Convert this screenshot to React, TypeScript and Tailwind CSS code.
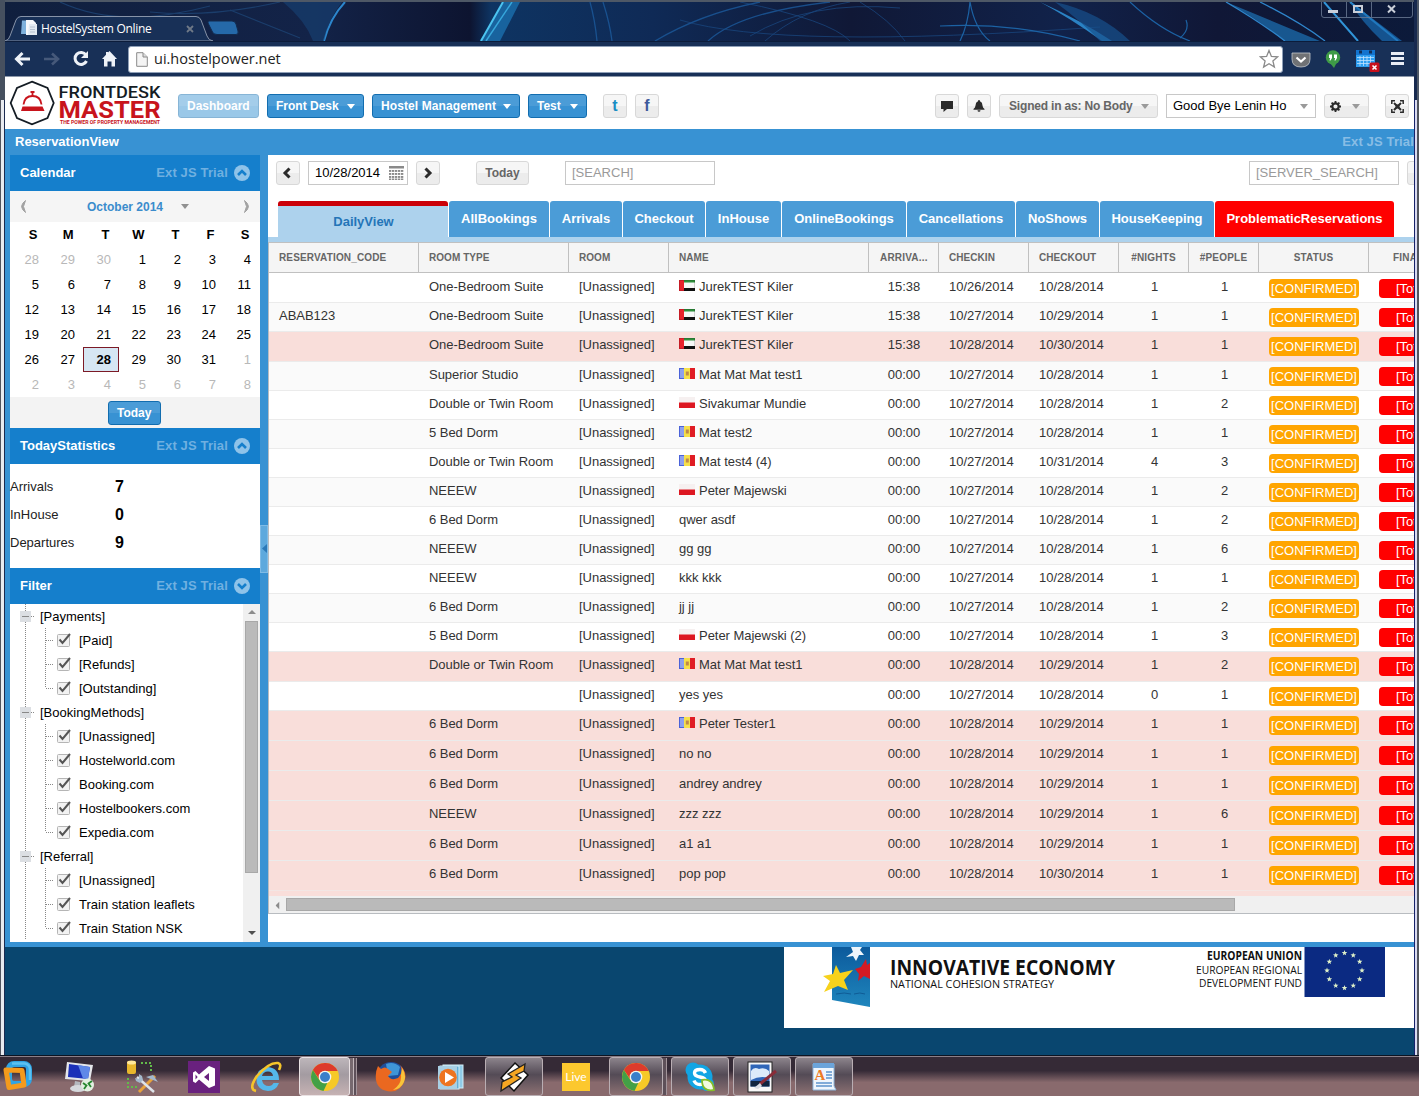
import React from 'react';

const Caret = ({ c = '#fff', w = 8, h = 5 }: { c?: string; w?: number; h?: number }) => (
  <svg width={w} height={h} viewBox="0 0 8 5" preserveAspectRatio="none" className="shrink-0"><path d="M0 0H8L4 5Z" fill={c} /></svg>
);

/* ---------- Browser chrome ---------- */

const TitleArt = () => (
  <svg width="1409" height="39" viewBox="5 2 1409 39" className="absolute left-0 top-0">
    <defs>
      <linearGradient id="tb" x1="0" x2="1">
        <stop offset="0" stopColor="#101f3e" /><stop offset=".22" stopColor="#132348" /><stop offset=".33" stopColor="#0d1430" />
        <stop offset=".345" stopColor="#0e3462" /><stop offset=".46" stopColor="#0f2a56" /><stop offset=".6" stopColor="#101836" />
        <stop offset=".75" stopColor="#11224a" /><stop offset=".86" stopColor="#101736" /><stop offset="1" stopColor="#0c1a3a" />
      </linearGradient>
    </defs>
    <rect x="5" y="2" width="1409" height="39" fill="url(#tb)" />
    <path d="M503 2L480 41H500L520 2Z" fill="#1c78b8" opacity=".7" />
    <path d="M503 2L481 41" stroke="#4cc4f0" strokeWidth="2" fill="none" />
    <path d="M512 2L486 41" stroke="#37a7dc" strokeWidth="1.5" fill="none" />
    <path d="M345 2Q330 18 324 41" stroke="#2c86cc" strokeWidth="2" fill="none" />
    <path d="M283 2Q305 20 313 41L324 41Q328 20 342 2Z" fill="#174377" opacity=".6" />
    <path d="M590 2Q595 20 597 41M603 2Q610 24 612 41M655 41Q700 14 760 2M708 41Q740 12 830 2" stroke="#1c5a9c" strokeWidth="1.3" fill="none" opacity=".8" />
    <path d="M740 2Q830 20 850 41M750 36Q810 0 900 8M765 41Q800 10 850 2M680 20Q780 50 1100 27M860 2Q890 20 905 41" stroke="#194a84" strokeWidth="1" fill="none" opacity=".7" />
    <path d="M1040 2Q1080 20 1112 41L1102 41Q1070 18 1040 2Z" fill="#2a82c4" />
    <path d="M1055 2Q1100 12 1130 41L1100 41Q1080 20 1055 2Z" fill="#17508c" opacity=".7" />
    <path d="M1226 2Q1270 20 1320 41H1284Q1260 20 1226 2Z" fill="#1c6cae" opacity=".75" />
    <path d="M1226 2Q1260 22 1285 41M1260 2Q1300 22 1325 41" stroke="#2f86cc" strokeWidth="1.3" fill="none" />
    <path d="M1324 2L1358 41M1350 2L1398 41" stroke="#3094d8" strokeWidth="2" fill="none" />
    <path d="M1350 2Q1375 20 1402 41H1382Q1360 20 1350 2Z" fill="#1a6cb4" opacity=".7" />
    <path d="M970 2Q968 25 960 41M970 2Q975 30 990 41M940 26Q1010 22 1080 41M1180 38Q1190 30 1186 20M1130 2Q1160 30 1190 41" stroke="#1c62a4" strokeWidth="1.2" fill="none" />
    <path d="M60 2Q120 30 210 6M150 12Q210 18 280 2M230 10L300 38" stroke="#1b3d6b" strokeWidth="1.2" fill="none" />
  </svg>
);

const Tab = () => (
  <svg width="240" height="26" viewBox="5 16 240 26" className="absolute left-0 bottom-0">
    <path d="M5 42Q9 41 10 37L16 21Q17.500 17.500 21 17.500H196Q199.500 17.500 201 21L207 37Q208.500 41.500 213 42Z" fill="#183057" stroke="#8793a8" strokeWidth="1" />
    <path d="M209 22H232Q235 22 236 25L238 32Q239 35.500 236 35.500H217Q213.500 35.500 212.500 33L208 24Q207.500 22 209 22Z" fill="#2569a9" stroke="#122a4e" strokeWidth="1" />
    <path d="M22 21.500H28V35H21Z" fill="#7fb1dc" />
    <path d="M26 21H33L36 24V36H26Z" fill="#f6f8fb" />
    <path d="M29 25H37V36H28Z" fill="#e3eaf2" /><path d="M30 28H35M30 30.500H35M30 33H35" stroke="#aab8c8" strokeWidth=".8" />
    <path d="M187 27L193 33M193 27L187 33" stroke="#6f7987" strokeWidth="1.8" />
  </svg>
);

const WindowButtons = () => (
  <svg width="94" height="18" viewBox="1321 0 94 18" className="absolute right-0 -top-[2px]">
    <path d="M1322.500 0V15Q1322.500 17.500 1325 17.500H1411Q1413.500 17.500 1413.500 15V0M1347.500 0V17M1372.500 0V17" fill="none" stroke="#6d7c96" strokeOpacity=".8" />
    <rect x="1329" y="10" width="10" height="3" fill="#c9ced8" />
    <rect x="1355" y="6" width="8" height="6" fill="none" stroke="#c9ced8" strokeWidth="2" />
    <path d="M1389 5.500L1396 12.500M1396 5.500L1389 12.500" stroke="#c9ced8" strokeWidth="2" />
  </svg>
);

const BrowserTop = () => (
  <div className="h-[77px] shrink-0 flex flex-col">
    <div className="h-[2px] bg-[#4e5866]" />
    <div className="h-[39px] relative overflow-hidden">
      <TitleArt />
      <Tab />
      <div className="relative pl-[36px] pt-[17px] leading-[20px] text-[12px] tracking-[-0.3px] text-white font-['Open_Sans',sans-serif]">HostelSystem Online</div>
      <WindowButtons />
    </div>
    <div className="h-[35px] bg-[#183057] flex items-center border-t border-[#0c1c3a]">
      <svg width="118" height="26" viewBox="5 46 118 26" className="shrink-0">
        <path d="M30 59H17M22.500 53L16.500 59L22.500 65" stroke="#eef2f8" strokeWidth="3" fill="none" />
        <path d="M44 59H57M52 53.500L58 59L52 64.500" stroke="#46597a" strokeWidth="2.600" fill="none" />
        <path d="M86 55A6 6 0 1 0 86.500 61" stroke="#eef2f8" strokeWidth="3" fill="none" />
        <path d="M88 51V58H81Z" fill="#eef2f8" />
        <path d="M109.500 51L117 59H115V66.500H111.500V61.500H107.500V66.500H104V59H102L106 54.700V52H108V52.600Z" fill="#eef2f8" />
      </svg>
      <div className="ml-[5px] w-[1155px] h-[27px] shrink-0 bg-white border border-[#8fa0b8] rounded-[3px] flex items-center">
        <svg width="12" height="15" viewBox="0 0 12 15" className="ml-[7px]"><path d="M.7 .7H7L11.300 5V14.300H.7Z" fill="#f4f4f4" stroke="#8a8a8a" /><path d="M7 .7V5H11.300" fill="#ddd" stroke="#8a8a8a" /></svg>
        <span className="ml-[6px] text-[14.500px] leading-[20px] tracking-[0px] text-[#222] font-['Open_Sans',sans-serif] grow">ui.hostelpower.net</span>
        <svg width="20" height="20" viewBox="0 0 20 20" className="mr-[3px]"><path d="M10 1.500L12.400 7.400L18.700 7.800L13.900 11.900L15.400 18L10 14.700L4.600 18L6.100 11.900L1.300 7.800L7.600 7.400Z" fill="#fff" stroke="#8a8a8a" strokeWidth="1.300" /></svg>
      </div>
      <svg width="126" height="30" viewBox="1288 44 126 30" className="ml-[5px] shrink-0">
        <path d="M1292 53H1310V59Q1310 67 1301 67Q1292 67 1292 59Z" fill="#707275" stroke="#c4c8cc" strokeWidth=".8" />
        <path d="M1296.500 57.500L1301 61.500L1305.500 57.500" stroke="#fff" strokeWidth="2.200" fill="none" />
        <circle cx="1333" cy="57.500" r="7.200" fill="#3f9b47" /><path d="M1330 63L1334 68L1337 62Z" fill="#3f9b47" />
        <path d="M1329 54.500H1332V58L1330.500 60.500H1329.500L1330.200 58H1329ZM1334 54.500H1337V58L1335.500 60.500H1334.500L1335.200 58H1334Z" fill="#fff" />
        <rect x="1356" y="51" width="19" height="16" fill="#2d9df0" /><rect x="1356" y="50" width="19" height="5" fill="#1374cf" />
        <rect x="1359" y="50.500" width="3" height="3" fill="#12315a" /><rect x="1369" y="50.500" width="3" height="3" fill="#12315a" />
        <path d="M1357 57.500H1374M1357 60.500H1374M1357 63.500H1374M1360 56V66M1363.500 56V66M1367 56V66M1370.500 56V66" stroke="#bfe2ff" strokeWidth=".8" />
        <rect x="1369.500" y="62.500" width="10" height="9.500" rx="1.500" fill="#c8101c" /><path d="M1372.500 65.500L1376.500 69.500M1376.500 65.500L1372.500 69.500" stroke="#fff" strokeWidth="1.600" />
        <path d="M1391 53.500H1404M1391 58.500H1404M1391 63.500H1404" stroke="#e9edf5" strokeWidth="3.200" />
      </svg>
    </div>
    <div className="h-[1px] bg-[#8c98aa]" />
  </div>
);

/* ---------- Application header ---------- */

const Logo = () => (
  <svg width="152" height="46" viewBox="9 80 152 46" className="shrink-0">
    <path d="M32 81.700L47.500 88L53.700 103L47.500 118L32 124.300L17 118L10.700 103L17 88Z" fill="#fff" stroke="#141c24" strokeWidth="1.800" />
    <path d="M23.500 104.500Q24.500 96 32.500 96Q40.500 96 41.500 104.500" fill="none" stroke="#c8141c" strokeWidth="1.800" />
    <path d="M32.500 96V92M30.500 92H34.500" stroke="#c8141c" strokeWidth="1.800" />
    <path d="M22.500 106.500H42.500L44.500 111H21Z" fill="#c8141c" />
    <g fontFamily="Roboto, sans-serif">
      <text x="58.500" y="97.500" fontSize="17" fontWeight="500" fill="#141c24" textLength="102" lengthAdjust="spacingAndGlyphs">FRONTDESK</text>
      <text x="58.500" y="118" fontSize="24.500" fontWeight="700" fill="#c8141c" textLength="102" lengthAdjust="spacingAndGlyphs">MASTER</text>
      <text x="60" y="123.500" fontSize="4.600" fontWeight="700" fill="#c8141c" textLength="100" lengthAdjust="spacingAndGlyphs">THE POWER OF PROPERTY MANAGEMENT</text>
    </g>
  </svg>
);

const BlueBtn = ({ label, cls, caret = true }: { label: string; cls: string; caret?: boolean }) => (
  <div className={'h-[24px] shrink-0 flex items-center justify-between rounded-[3px] border border-[#126daf] bg-linear-to-b from-[#4b9cd7] from-50% to-[#3892d3] to-50% pl-[8px] pr-[8px] text-[12px] font-bold text-white whitespace-nowrap ' + cls}>
    <span>{label}</span>
    {caret && <Caret />}
  </div>
);

const GrayBtn = ({ cls, children }: { cls: string; children?: React.ReactNode }) => (
  <div className={'h-[24px] shrink-0 flex items-center rounded-[3px] border border-[#d8d8d8] bg-linear-to-b from-[#f6f6f6] from-50% to-[#ececec] to-50% text-[12px] font-bold text-[#666] whitespace-nowrap ' + cls}>{children}</div>
);

const Header = () => (
  <div className="h-[52px] shrink-0 bg-white flex items-start">
    <div className="ml-[4px] w-[169px] pt-[3px]"><Logo /></div>
    <div className="grow flex items-center pt-[17px]">
      <BlueBtn label="Dashboard" cls="w-[81px] opacity-50" caret={false} />
      <BlueBtn label="Front Desk" cls="ml-[8px] w-[97px]" />
      <BlueBtn label="Hostel Management" cls="ml-[8px] w-[148px] tracking-[0.1px]" />
      <BlueBtn label="Test" cls="ml-[8px] w-[59px]" />
      <GrayBtn cls="ml-[16px] w-[24px] justify-center"><span className="text-[16px] leading-[20px] text-[#1a8ec4]">t</span></GrayBtn>
      <GrayBtn cls="ml-[8px] w-[24px] justify-center"><span className="text-[16px] leading-[20px] text-[#3f5a9b]">f</span></GrayBtn>
      <div className="grow" />
      <GrayBtn cls="w-[24px] justify-center"><svg width="12" height="11" viewBox="0 0 12 11"><path d="M0 0H12V8H6L2.500 11V8H0Z" fill="#2b2b2b" /></svg></GrayBtn>
      <GrayBtn cls="ml-[8px] w-[24px] justify-center"><svg width="12" height="12" viewBox="0 0 12 12"><path d="M6 0Q7 0 7 1.300Q9.500 2.200 9.500 5.500Q9.600 7.500 11.500 9V9.800H.5V9Q2.400 7.500 2.500 5.500Q2.500 2.200 5 1.300Q5 0 6 0ZM4.500 10.300H7.500Q7.500 11.800 6 11.800Q4.500 11.800 4.500 10.300Z" fill="#2b2b2b" /></svg></GrayBtn>
      <GrayBtn cls="ml-[8px] w-[159px] justify-between pl-[9px] pr-[8px]"><span className="tracking-[-0.18px]">Signed in as: No Body</span><Caret c="#9a9a9a" /></GrayBtn>
      <div className="ml-[8px] w-[150px] h-[24px] shrink-0 border border-[#c8c8c8] flex items-center justify-between pl-[6px] pr-[7px] text-[13px] text-black whitespace-nowrap"><span>Good Bye Lenin Ho</span><Caret c="#9a9a9a" /></div>
      <GrayBtn cls="ml-[8px] w-[45px] justify-between pl-[5px] pr-[8px]"><svg width="11" height="11" viewBox="0 0 11 11"><circle cx="5.500" cy="5.500" r="3.200" fill="none" stroke="#2b2b2b" strokeWidth="2.200" /><path d="M5.500 0V2M5.500 9V11M0 5.500H2M9 5.500H11M1.600 1.600L3 3M8 8L9.400 9.400M9.400 1.600L8 3M1.600 9.400L3 8" stroke="#2b2b2b" strokeWidth="1.800" /></svg><Caret c="#9a9a9a" /></GrayBtn>
      <GrayBtn cls="ml-[16px] mr-[5px] w-[24px] justify-center"><svg width="13" height="13" viewBox="0 0 13 13"><path d="M.8 4V.8H4M9 .8H12.200V4M12.200 9V12.200H9M4 12.200H.8V9" fill="none" stroke="#2b2b2b" strokeWidth="1.500" /><path d="M3 3L10 10M10 3L3 10" stroke="#2b2b2b" strokeWidth="2" /><rect x="4.500" y="4.500" width="4" height="4" fill="#2b2b2b" /></svg></GrayBtn>
    </div>
  </div>
);

/* ---------- Side panels ---------- */

const PanelHead = ({ title, up = true }: { title: string; up?: boolean }) => (
  <div className="h-[36px] shrink-0 bg-[#157fcc] flex items-center pl-[10px] pr-[10px] text-[13px] font-bold text-white">
    <span className="grow">{title}</span>
    <span className="text-[#70b0e0] tracking-[0.14px]">Ext JS Trial</span>
    <svg width="16" height="16" viewBox="0 0 16 16" className="ml-[6px]"><circle cx="8" cy="8" r="8" fill="#8fc3e9" /><path d={up ? 'M4 10L8 6L12 10' : 'M4 6L8 10L12 6'} fill="none" stroke="#157fcc" strokeWidth="2.600" /></svg>
  </div>
);

const days = [28, 29, 30, ...Array.from({ length: 31 }, (_, i) => i + 1), 1, 2, 3, 4, 5, 6, 7, 8];

const Calendar = () => (
  <div className="h-[237px] shrink-0 bg-white flex flex-col">
    <div className="h-[31px] bg-[#f5f5f5] flex items-center px-[10px]">
      <svg width="6" height="13" viewBox="0 0 6 13"><path d="M5.500 .5Q2 3 1.500 6.500Q2 10 5.500 12.500L3.500 6.500Z" fill="#a2a2a2" stroke="#a2a2a2" /></svg>
      <span className="ml-[61px] text-[12px] font-bold text-[#3b8ccc]">October 2014</span>
      <span className="ml-[18px] grow"><Caret c="#919191" /></span>
      <svg width="6" height="13" viewBox="0 0 6 13"><path d="M.5 .5Q4 3 4.500 6.500Q4 10 .5 12.500L2.500 6.500Z" fill="#a2a2a2" stroke="#a2a2a2" /></svg>
    </div>
    <div className="ml-[1px] grid grid-cols-[36px_36px_36px_35px_35px_35px_35px] auto-rows-[25px] text-right text-[13px] leading-[25px]">
      {'SMTWTFS'.split('').map((d, i) => <div key={'h' + i} className="pr-[9.500px] font-bold text-black">{d}</div>)}
      {days.map((d, i) => {
        const off = i < 3 || i > 33;
        const sel = i === 30;
        return (
          <div key={i} className={sel ? 'pr-[7px] leading-[23px] font-bold text-black bg-[#d6e6f3] border border-[#7c1a26]' : off ? 'pr-[8px] text-[#b8b8b8]' : 'pr-[8px] text-black'}>{d}</div>
        );
      })}
    </div>
    <div className="h-[31px] bg-[#f3f3f3] flex items-center justify-center"><BlueBtn label="Today" cls="w-[53px] mr-[1px]" caret={false} /></div>
  </div>
);

const Stats = () => (
  <div className="h-[104px] shrink-0 bg-white pt-[9px]">
    {[['Arrivals', '7'], ['InHouse', '0'], ['Departures', '9']].map(([k, v]) => (
      <div key={k} className="h-[28px] flex items-center">
        <span className="w-[105px] text-[13px] text-[#222]">{k}</span>
        <span className="text-[16px] font-bold text-black">{v}</span>
      </div>
    ))}
  </div>
);

type Node = { t: string; leaf?: boolean; last?: boolean };
const tree: Node[] = [
  { t: '[Payments]' }, { t: '[Paid]', leaf: true }, { t: '[Refunds]', leaf: true }, { t: '[Outstanding]', leaf: true, last: true },
  { t: '[BookingMethods]' }, { t: '[Unassigned]', leaf: true }, { t: 'Hostelworld.com', leaf: true }, { t: 'Booking.com', leaf: true }, { t: 'Hostelbookers.com', leaf: true }, { t: 'Expedia.com', leaf: true, last: true },
  { t: '[Referral]' }, { t: '[Unassigned]', leaf: true }, { t: 'Train station leaflets', leaf: true }, { t: 'Train Station NSK', leaf: true, last: true },
];

const TreeRow = ({ n }: { n: Node }) => (
  <div className="h-[24px] shrink-0 flex items-center text-[13px] text-black whitespace-nowrap">
    {n.leaf ? (
      <svg width="69" height="24" viewBox="0 0 69 24" className="shrink-0">
        <path d={n.last ? 'M15.500 0V24M35.500 0V12' : 'M15.500 0V24M35.500 0V24'} stroke="#888" strokeDasharray="1 1" />
        <path d="M36 12.500H44" stroke="#888" strokeDasharray="1 1" />
        <rect x="47.500" y="6.500" width="12" height="12" rx="1" fill="#f2f2f2" stroke="#b5b5b5" />
        <path d="M49.500 11.500L52.500 15L60 6" stroke="#555" strokeWidth="2" fill="none" />
      </svg>
    ) : (
      <svg width="30" height="24" viewBox="0 0 30 24" className="shrink-0">
        <path d="M15.500 0V24M21 12.500H25" stroke="#888" strokeDasharray="1 1" />
        <rect x="10" y="7" width="11" height="11" fill="#dcdfe3" /><path d="M12 12.500H19" stroke="#888" />
      </svg>
    )}
    <span className="pt-[2px]">{n.t}</span>
  </div>
);

const Sidebar = () => (
  <div className="w-[250px] shrink-0 flex flex-col">
    <PanelHead title="Calendar" />
    <Calendar />
    <PanelHead title="TodayStatistics" />
    <Stats />
    <PanelHead title="Filter" up={false} />
    <div className="grow bg-white flex overflow-hidden">
      <div className="grow flex flex-col">{tree.map((n, i) => <TreeRow key={i} n={n} />)}</div>
      <div className="w-[17px] shrink-0 bg-[#f0f0f0] flex flex-col items-center">
        <div className="h-[17px] flex items-center rotate-180"><Caret c="#8c8c8c" h={4} /></div>
        <div className="w-[13px] h-[252px] bg-[#bababa] border border-[#a8a8a8]" />
        <div className="grow" />
        <div className="h-[18px] flex items-center"><Caret c="#505050" h={4} /></div>
      </div>
    </div>
  </div>
);

/* ---------- Reservation grid ---------- */

const ViewToolbar = () => (
  <div className="h-[46px] shrink-0 flex items-start pt-[6px] pl-[8px] overflow-hidden">
    <GrayBtn cls="w-[24px] justify-center pr-[3px]"><svg width="9" height="12" viewBox="0 0 9 12"><path d="M7.500 1.500L3 6L7.500 10.500" fill="none" stroke="#2b2b2b" strokeWidth="3" /></svg></GrayBtn>
    <div className="ml-[8px] w-[100px] h-[24px] shrink-0 border border-[#c8c8c8] flex items-center pl-[6px] text-[13px] text-black">
      <span className="w-[74px]">10/28/2014</span>
      <svg width="15" height="14" viewBox="0 0 15 14"><rect width="15" height="2.500" fill="#8a8a8a" />
        {[4, 7, 10, 12.500].map((y) => [0, 3, 6, 9, 12].map((x) => <rect key={x + '-' + y} x={x} y={y} width="2.300" height="1.900" fill="#8a8a8a" />))}
      </svg>
    </div>
    <GrayBtn cls="ml-[8px] w-[24px] justify-center"><svg width="9" height="12" viewBox="0 0 9 12"><path d="M1.500 1.500L6 6L1.500 10.500" fill="none" stroke="#2b2b2b" strokeWidth="3" /></svg></GrayBtn>
    <GrayBtn cls="ml-[36px] w-[53px] justify-center">Today</GrayBtn>
    <div className="ml-[36px] w-[150px] h-[24px] shrink-0 border border-[#c8c8c8] flex items-center pl-[6px] text-[13px] text-[#9a9a9a]">[SEARCH]</div>
    <div className="ml-[534px] w-[150px] h-[24px] shrink-0 border border-[#c8c8c8] flex items-center pl-[6px] text-[13px] text-[#9a9a9a]">[SERVER_SEARCH]</div>
    <GrayBtn cls="ml-[8px] w-[24px]" />
  </div>
);

const tabs: [string, string][] = [
  ['AllBookings', 'w-[100px] bg-[#4b9cd7]'], ['Arrivals', 'w-[72px] bg-[#4b9cd7]'], ['Checkout', 'w-[82px] bg-[#4b9cd7]'], ['InHouse', 'w-[75px] bg-[#4b9cd7]'],
  ['OnlineBookings', 'w-[124px] bg-[#4b9cd7]'], ['Cancellations', 'w-[108px] bg-[#4b9cd7]'], ['NoShows', 'w-[83px] bg-[#4b9cd7]'], ['HouseKeeping', 'w-[114px] bg-[#4b9cd7]'],
  ['ProblematicReservations', 'w-[179px] bg-[#ff0000]'],
];

const TabStrip = () => (
  <div className="h-[41px] shrink-0 flex border-b-[5px] border-[#add2ed] pl-[10px] gap-[1px] text-[13px] font-bold overflow-hidden">
    <div className="w-[170px] shrink-0 rounded-t-[3px] border-t-[5px] border-[#cb0008] bg-[#add2ed] text-[#2475b8] flex items-center justify-center pl-[1px]">DailyView</div>
    {tabs.map(([t, c]) => <div key={t} className={'shrink-0 rounded-t-[3px] text-white flex items-center justify-center ' + c}>{t}</div>)}
  </div>
);

const cols = 'grid grid-cols-[150px_150px_100px_200px_70px_90px_90px_70px_70px_110px_110px]';

const heads = ['RESERVATION_CODE', 'ROOM TYPE', 'ROOM', 'NAME', 'ARRIVA...', 'CHECKIN', 'CHECKOUT', '#NIGHTS', '#PEOPLE', 'STATUS', 'FINANCE'];

const Flag = ({ f }: { f: string }) => (
  <svg width="16" height="11" viewBox="0 0 16 11" className="mt-[6px] mr-[4px] shrink-0">
    {f === 'ae' && <><rect width="16" height="11" fill="#f7f7f7" /><rect width="16" height="2.500" fill="#2f8f3c" /><rect y="8" width="16" height="3" fill="#111" /><rect width="5" height="11" fill="#e8222c" /><rect x=".5" y=".5" width="15" height="10" fill="none" stroke="#000" strokeOpacity=".15" /></>}
    {f === 'ad' && <><rect width="6" height="11" fill="#4a62d8" /><rect x="1" y="1" width="4" height="9" fill="#8ea0ee" /><rect x="5" width="6" height="11" fill="#f6e04a" /><rect x="11" width="5" height="11" fill="#e01c24" /><rect x="6.800" y="3.500" width="3" height="4" fill="#c08a4a" /></>}
    {f === 'pl' && <><rect width="16" height="11" fill="#f6f0f0" /><rect y="5.500" width="16" height="5.500" fill="#dd1822" /></>}
  </svg>
);

const D = 'Double or Twin Room', O = 'One-Bedroom Suite', S6 = '6 Bed Dorm', N = 'NEEEW';
const W = 'bg-white', A = 'bg-[#fafafa]', P = 'bg-[#f9deda]';
const S = 'h-[29px]', T = 'h-[30px]';
/* code, room type, flag, name, arrival, check-in, check-out, nights, people, background, height */
const rows: string[][] = [
  ['', O, 'ae', 'JurekTEST Kiler', '15:38', '26', '10/28', '1', '1', W, S],
  ['ABAB123', O, 'ae', 'JurekTEST Kiler', '15:38', '27', '10/29', '1', '1', A, S],
  ['', O, 'ae', 'JurekTEST Kiler', '15:38', '28', '10/30', '1', '1', P, T],
  ['', 'Superior Studio', 'ad', 'Mat Mat Mat test1', '00:00', '27', '10/28', '1', '1', A, S],
  ['', D, 'pl', 'Sivakumar Mundie', '00:00', '27', '10/28', '1', '2', W, S],
  ['', '5 Bed Dorm', 'ad', 'Mat test2', '00:00', '27', '10/28', '1', '1', A, S],
  ['', D, 'ad', 'Mat test4 (4)', '00:00', '27', '10/31', '4', '3', W, S],
  ['', N, 'pl', 'Peter Majewski', '00:00', '27', '10/28', '1', '2', A, S],
  ['', S6, '', 'qwer asdf', '00:00', '27', '10/28', '1', '2', W, S],
  ['', N, '', 'gg gg', '00:00', '27', '10/28', '1', '6', A, S],
  ['', N, '', 'kkk kkk', '00:00', '27', '10/28', '1', '1', W, S],
  ['', S6, '', 'jj jj', '00:00', '27', '10/28', '1', '2', A, S],
  ['', '5 Bed Dorm', 'pl', 'Peter Majewski (2)', '00:00', '27', '10/28', '1', '3', W, S],
  ['', D, 'ad', 'Mat Mat Mat test1', '00:00', '28', '10/29', '1', '2', P, T],
  ['', '', '', 'yes yes', '00:00', '27', '10/28', '0', '1', W, S],
  ['', S6, 'ad', 'Peter Tester1', '00:00', '28', '10/29', '1', '1', P, T],
  ['', S6, '', 'no no', '00:00', '28', '10/29', '1', '1', P, T],
  ['', S6, '', 'andrey andrey', '00:00', '28', '10/29', '1', '1', P, T],
  ['', N, '', 'zzz zzz', '00:00', '28', '10/29', '1', '6', P, T],
  ['', S6, '', 'a1 a1', '00:00', '28', '10/29', '1', '1', P, T],
  ['', S6, '', 'pop pop', '00:00', '28', '10/30', '1', '1', P, T],
];

const Grid = () => (
  <div className="shrink-0 h-[672px] border-l border-b border-[#b8bcc0] flex flex-col overflow-hidden">
    <div className={'h-[31px] shrink-0 border-b border-t border-[#c0c0c0] bg-[#f5f5f5] text-[10px] font-bold text-[#666] items-stretch ' + cols}>
      {heads.map((h, i) => (
        <div key={h} className={'flex items-center overflow-hidden border-r border-[#c0c0c0] ' + (i === 0 ? 'px-[10px] tracking-[0.15px]' : i === 10 ? 'pl-[24px] tracking-[0.2px]' : i > 6 ? 'justify-center tracking-[0.2px]' : i === 4 ? 'pl-[11px] tracking-[0.2px]' : 'px-[10px] tracking-[0.05px]')}>{h}</div>
      ))}
    </div>
    <div className="grow overflow-hidden text-[13px] tracking-[-0.03px] text-[#333]">
      {rows.map((r, i) => {
        const [code, room, flag, name, arr, cin, cout, nights, people, bg, h] = r;
        return (
          <div key={i} className={cols + ' border-t ' + (i === 0 ? 'border-white ' : 'border-[#ebebeb] ') + bg + ' ' + h + ' leading-[26px]'}>
            <div className="pl-[10px]">{code}</div>
            <div className="pl-[10px]">{room}</div>
            <div className="pl-[10px]">[Unassigned]</div>
            <div className="pl-[10px] h-[26px] flex items-start">{flag && <Flag f={flag} />}{name}</div>
            <div className="text-center">{arr}</div>
            <div className="pl-[10px]">10/{cin}/2014</div>
            <div className="pl-[10px]">{cout}/2014</div>
            <div className="text-center pl-[1px]">{nights}</div>
            <div className="text-center pl-[1px]">{people}</div>
            <div className="pt-[5px]"><div className="ml-[10px] w-[90px] h-[19px] rounded-[4px] bg-[#ffa500] text-white leading-[20px] text-center tracking-[0px]">[CONFIRMED]</div></div>
            <div className="pt-[5px]"><div className="ml-[10px] w-[90px] h-[19px] rounded-[4px] bg-[#ff0000] text-white leading-[20px] pl-[17px]">[Total]</div></div>
          </div>
        );
      })}
      <div className="h-[8px] bg-[#f9deda] border-t border-[#f3e6e4]" />
    </div>
    <div className="h-[17px] shrink-0 bg-[#f0f0f0] flex items-center">
      <div className="w-[17px] flex justify-center rotate-90"><Caret c="#8c8c8c" h={4} /></div>
      <div className="w-[949px] h-[13px] bg-[#bababa] border border-[#a8a8a8]" />
    </div>
  </div>
);

/* ---------- Footer banner ---------- */

const star = (cx: number, cy: number, r: number) => {
  const p: string[] = [];
  for (let i = 0; i < 10; i++) {
    const a = (Math.PI / 5) * i - Math.PI / 2;
    const q = i % 2 ? r * 0.42 : r;
    p.push((cx + q * Math.cos(a)).toFixed(2) + ',' + (cy + q * Math.sin(a)).toFixed(2));
  }
  return p.join(' ');
};

const Banner = () => (
  <div className="h-[109px] shrink-0 bg-[#09466f] flex justify-end items-start">
    <div className="w-[630px] h-[81px] bg-white">
      <svg width="630" height="81" viewBox="784 947 630 81">
        <defs><linearGradient id="ie" x1="0" y1="0" x2="0" y2="1"><stop offset="0" stopColor="#0c5a9c" /><stop offset="1" stopColor="#1f86bd" /></linearGradient></defs>
        <path d="M832 947H870V1007L832 1000Z" fill="url(#ie)" />
        <path d="M851 947L853 952L846 957L853 956L856 961L859 955L864 955L860 950L862 947Z" fill="#eef5fb" />
        <path d="M866 959L867 965L870 963V979L864 976L858 981L859 974L855 969L861 967Z" fill="#d31a24" />
        <path d="M836 965L840 973L853 970L844 980L848 990L838 986L824 992L830 981L823 976L833 974Z" fill="#f7d21c" />
        <path d="M836 994Q845 992 851 994M854 994Q860 992 865 994" stroke="#0f5c96" strokeWidth="1" fill="none" />
        <g fontFamily="'Open Sans', sans-serif" fill="#111">
          <text x="890" y="974.500" fontSize="20.500" fontWeight="700" textLength="225" lengthAdjust="spacingAndGlyphs">INNOVATIVE ECONOMY</text>
          <text x="890" y="988" fontSize="11.500" textLength="164" lengthAdjust="spacingAndGlyphs">NATIONAL COHESION STRATEGY</text>
          <text x="1207" y="960" fontSize="11.500" fontWeight="700" textLength="95" lengthAdjust="spacingAndGlyphs">EUROPEAN UNION</text>
          <text x="1196" y="973.500" fontSize="11.500" textLength="106" lengthAdjust="spacingAndGlyphs">EUROPEAN REGIONAL</text>
          <text x="1199" y="987" fontSize="11.500" textLength="103" lengthAdjust="spacingAndGlyphs">DEVELOPMENT FUND</text>
        </g>
        <rect x="1304.500" y="947" width="80.500" height="50" fill="#0b2a82" />
        {Array.from({ length: 12 }, (_, i) => <polygon key={i} points={star(1344.500 + 17.500 * Math.sin((i * Math.PI) / 6), 970.500 - 17.500 * Math.cos((i * Math.PI) / 6), 2.900)} fill="#dff0c8" />)}
      </svg>
    </div>
  </div>
);

/* ---------- Taskbar ---------- */

const TaskBtn = ({ cls, children }: { cls: string; children: React.ReactNode }) => (
  <div className={'h-[39px] shrink-0 flex items-center justify-center rounded-[3px] border border-[#b9aeb3] bg-linear-to-b from-[#8c848c] via-[#544b56] via-45% to-[#8d7173] ' + cls}>{children}</div>
);

const Chrome = () => (
  <svg width="30" height="30" viewBox="0 0 30 30">
    <circle cx="15" cy="15" r="14" fill="#f6c927" />
    <path d="M2.900 8A14 14 0 0 1 27.600 9H15A6 6 0 0 0 9.500 17.500Z" fill="#dd3b2c" />
    <path d="M2.900 8L9.300 18A6 6 0 0 0 17.500 20.500L13.500 28.900A14 14 0 0 1 2.900 8Z" fill="#43a047" />
    <circle cx="15" cy="15" r="6.300" fill="#f2f5f7" /><circle cx="15" cy="15" r="5" fill="#3b7fc9" />
  </svg>
);

const Taskbar = () => (
  <div className="h-[40px] shrink-0 border-t border-[#8b7f88] bg-linear-to-b from-[#352a36] from-35% to-[#896a6d] to-65% flex items-center">
    <svg width="30" height="32" viewBox="0 0 30 32" className="ml-[3px] shrink-0">
      <rect x="6" y="3" width="20" height="20" rx="5" fill="none" stroke="#2fa4e4" strokeWidth="6" />
      <path d="M9 2.500H22Q27 3.500 27 9V19" fill="none" stroke="#5cc0f0" strokeWidth="2.500" />
      <path d="M3 9L19 9.500L21 24L6 26.500Z" fill="none" stroke="#f49a1c" strokeWidth="5" strokeLinejoin="round" />
    </svg>
    <svg width="32" height="32" viewBox="0 0 32 32" className="ml-[32px] shrink-0">
      <path d="M2 1L28 4L25 20L0 18Z" fill="#e4e6ea" /><path d="M4 3L25 6L23 18L3 16Z" fill="#1b30b8" /><path d="M13 4L25 6L23 18L18 17.500Z" fill="#5f88e8" />
      <path d="M10 20L15 21V26H9Z" fill="#b4b8be" /><ellipse cx="13" cy="27.500" rx="8" ry="3.500" fill="#d5d8dc" />
      <circle cx="22.500" cy="24" r="6.500" fill="#e2efe0" /><path d="M18 22L21.500 24.500L19 28M27 20L23.500 22.500L26 26" stroke="#27872f" strokeWidth="1.800" fill="none" />
    </svg>
    <svg width="32" height="34" viewBox="0 0 32 34" className="ml-[30px] shrink-0">
      <rect x="0" y="1" width="9" height="13" rx="2" fill="#e8b62c" /><ellipse cx="4.500" cy="2.500" rx="4.500" ry="2" fill="#ffe89a" />
      <path d="M14 3H24V13M1 18V27H11" stroke="#63bb4a" strokeWidth="2" strokeDasharray="2 2" fill="none" />
      <path d="M12 32L28 16" stroke="#e8a33c" strokeWidth="3" /><path d="M10 17L27 32" stroke="#dfe4ea" strokeWidth="2.500" /><path d="M12 14L12 19L8 18L9 21L13 23L16 20L15 16Z M19 17L26 15L31 22L26 20Z" fill="#a4b8cc" />
    </svg>
    <svg width="32" height="32" viewBox="0 0 32 32" className="ml-[29px] shrink-0"><rect width="32" height="32" fill="#69217e" /><path d="M21 5L27 7.500V24.500L21 27L11 18.500L7.500 22L5 20.500V11.500L7.500 10L11 13.500ZM21 12L16 16L21 20ZM7.500 13.500V18.500L9.700 16Z" fill="#fff" fillRule="evenodd" /></svg>
    <svg width="32" height="32" viewBox="0 0 32 32" className="ml-[31px] shrink-0">
      <path d="M28 19H11Q12 25 18 25Q21 25 22.500 22H28Q25 30 17 30Q5.500 29 5.500 18Q6 7 17 6Q28 7 28 19ZM11 15H22Q21.500 10.500 17 10.500Q12 10.500 11 15Z" fill="#55b8ea" fillRule="evenodd" />
      <path d="M5 30Q-3 28 6 15Q18 1 27 2Q31 3 28 9" fill="none" stroke="#f5c42a" strokeWidth="2.600" />
    </svg>
    <TaskBtn cls="ml-[16px] w-[51px] !from-[#bdb6ba] !via-[#a39ba1] !to-[#c6b2b3] !border-[#eae2e4]"><Chrome /></TaskBtn>
    <div className="w-[4px] h-[37px] border-r border-[#c3b7bb] bg-[#77696f]" /><div className="w-[3px] h-[37px] border-r border-[#a3959b] bg-[#5e5059]" />
    <svg width="32" height="32" viewBox="0 0 32 32" className="ml-[17px] shrink-0">
      <circle cx="17" cy="15" r="14" fill="#1e4f9c" /><path d="M12 3Q20 0 26 6L24 14L14 15Z" fill="#3f96d8" />
      <path d="M4 5L7 8Q11 5 14 8L18 11L14 15Q17 20 24 17Q30 10 26 4Q33 11 31 18Q28 30 17 30.500Q4 30 2 19Q1 11 4 5Z" fill="#ea6820" /><path d="M28 7Q33 14 30 21Q27 28 19 29Q28 23 27 14Z" fill="#f8c43a" />
    </svg>
    <svg width="28" height="28" viewBox="0 0 28 28" className="ml-[31px] shrink-0"><rect x="6" y="2" width="20" height="23" fill="#90cbe8" stroke="#d4edf8" /><rect x="3" y="3" width="19" height="23" fill="#63aed6" stroke="#d4edf8" /><rect x="1" y="3" width="19" height="23" fill="#a9cfe4" /><circle cx="11" cy="14.500" r="8.800" fill="#ee7420" /><path d="M8 9V20L17 14.500Z" fill="#fff" /></svg>
    <TaskBtn cls="ml-[20px] w-[58px]"><svg width="32" height="32" viewBox="0 0 32 32"><path d="M17 2L30 14L16 30L3 17Z" fill="#fff" stroke="#111" strokeWidth="1.500" /><path d="M27 3L10 13L14 16L4 21L3 30L23 17L18 14L26 10Z" fill="#f5a623" stroke="#222" strokeWidth="1.300" /></svg></TaskBtn>
    <div className="ml-[19px] w-[28px] h-[28px] bg-[#fcc82e] text-white text-[12px] flex items-center justify-center font-['Lato',sans-serif]">Live</div>
    <TaskBtn cls="ml-[19px] w-[54px]"><Chrome /></TaskBtn>
    <div className="w-[4px] h-[37px] border-r border-[#a3959b] bg-[#5e5059]" />
    <TaskBtn cls="ml-[4px] w-[58px]"><svg width="30" height="30" viewBox="0 0 30 30"><circle cx="8" cy="8" r="7.500" fill="#12a5e4" /><circle cx="15" cy="15" r="12.500" fill="#12a5e4" /><circle cx="22" cy="22" r="7" fill="#12a5e4" /><path d="M20.500 11Q19 7.500 15 7.500Q9.500 7.500 9.500 11Q9.500 14 15 15Q20.500 16 20.500 19Q20.500 22.500 15 22.500Q10.500 22.500 9 18.500" fill="none" stroke="#fff" strokeWidth="3.400" /><path d="M17 18Q28 16 29 28Q17 30 17 18Z" fill="#f2fbe0" stroke="#86bd2a" strokeWidth="1.800" /></svg></TaskBtn>
    <TaskBtn cls="ml-[4px] w-[58px]"><svg width="32" height="32" viewBox="0 0 32 32" className="mr-[2px]"><rect x="3" y="1" width="24" height="30" fill="#f8f8f8" stroke="#222" /><rect x="5.500" y="3.500" width="19" height="22" fill="#2f66b8" /><path d="M6 10Q9 5 14 8Q20 6 24 10V17Q15 14 6 19Z" fill="#dcebfa" /><rect x="5.500" y="20" width="19" height="5.500" fill="#10243f" /><path d="M31 10L15 23" stroke="#8a2c38" strokeWidth="3" /><path d="M15 22L9 27L13 28L17 25Z" fill="#d8dce4" /></svg></TaskBtn>
    <TaskBtn cls="ml-[4px] w-[58px]"><svg width="26" height="30" viewBox="0 0 26 30"><path d="M2 2H23V24L25 28H2Z" fill="#eef5fc" stroke="#8fb6dc" /><rect x="2" y="1" width="21" height="5" fill="#6ba4da" /><text x="3.500" y="18" fontSize="15" fontWeight="700" fontFamily="Liberation Serif, serif" fill="#ee7a24">A</text><path d="M15 10H21M15 13H21M15 16H21M5 21H21M5 24H21" stroke="#5c93cc" strokeWidth="1.400" /></svg></TaskBtn>
  </div>
);

export default function App() {
  return (
    <div className="w-[1419px] h-[1096px] overflow-hidden flex flex-col font-['Liberation_Sans',Arial,sans-serif]">
      <div className="h-[1055px] shrink-0 flex">
        <div className="w-[5px] shrink-0 flex flex-col">
          <div className="h-[100px] bg-[#46505f]" />
          <div className="grow bg-[#e9ebf0] border-l border-[#50545e] border-r-[#1b2a50] border-r" />
        </div>
        <div className="w-[1409px] h-[1056px] shrink-0 flex flex-col overflow-hidden">
          <BrowserTop />
          <Header />
          <div className="h-[818px] shrink-0 bg-[#3892d3] flex flex-col">
            <div className="h-[26px] shrink-0 flex items-center justify-between pl-[10px] text-[13px] font-bold text-white"><span>ReservationView</span><span className="text-[#88bde5] tracking-[0.14px]">Ext JS Trial</span></div>
            <div className="h-[787px] flex pl-[5px]">
              <Sidebar />
              <div className="w-[8px] shrink-0 flex flex-col justify-center">
                <div className="h-[48px] bg-[#5ea9dd] border border-[#7fbbe6] flex items-center justify-center"><svg width="5" height="9" viewBox="0 0 5 9"><path d="M5 0V9L0 4.500Z" fill="#2c79b8" /></svg></div>
              </div>
              <div className="grow min-w-0 bg-white flex flex-col overflow-hidden">
                <ViewToolbar />
                <TabStrip />
                <Grid />
              </div>
            </div>
          </div>
          <Banner />
        </div>
        <div className="w-[5px] shrink-0 flex flex-col">
          <div className="h-[100px] bg-[#17294f] border-r-2 border-[#4e5866]" />
          <div className="grow bg-[#d9daf0] border-l border-[#16226a] border-r-[#50545e] border-r-2" />
        </div>
      </div>
      <div className="h-[1px] shrink-0 bg-[#0c1422]" />
      <Taskbar />
    </div>
  );
}
